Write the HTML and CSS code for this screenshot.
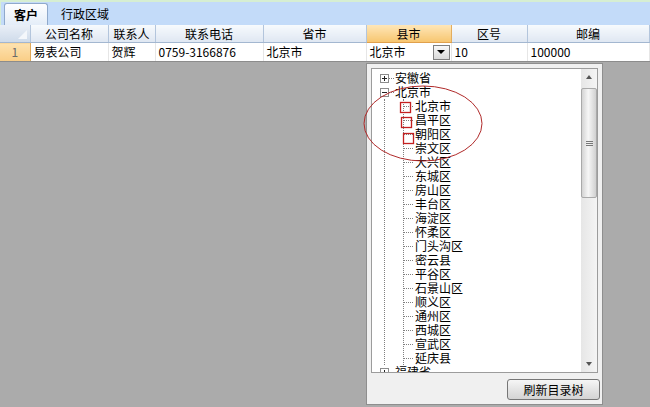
FILE: index.html
```html
<!DOCTYPE html>
<html lang="zh-CN">

<head>
    <meta charset="UTF-8">
    <meta name="viewport" content="width=device-width, initial-scale=1.0">
    <title>客户</title>
    <link rel="stylesheet" href="styles.css">
</head>

<body>
    <div class="app">
        <div class="tabs">
            <div class="tab active">客户</div>
            <div class="tab">行政区域</div>
        </div>

        <table class="grid">
            <colgroup>
                <col style="width:30px">
                <col style="width:78px">
                <col style="width:47px">
                <col style="width:108px">
                <col style="width:103px">
                <col style="width:85px">
                <col style="width:76px">
                <col style="width:122px">
            </colgroup>
            <thead>
                <tr>
                    <th class="corner"><div class="corner-in"><span class="tri"></span></div></th>
                    <th>公司名称</th>
                    <th>联系人</th>
                    <th>联系电话</th>
                    <th>省市</th>
                    <th class="sel">县市</th>
                    <th>区号</th>
                    <th>邮编</th>
                </tr>
            </thead>
            <tbody>
                <tr>
                    <td class="rownum">1</td>
                    <td>易表公司</td>
                    <td>贺辉</td>
                    <td>0759-3166876</td>
                    <td>北京市</td>
                    <td class="combo">
                        <div class="combo-in">
                            <span>北京市</span>
                            <span class="drop-btn"><span class="arrow-down"></span></span>
                        </div>
                    </td>
                    <td>10</td>
                    <td>100000</td>
                </tr>
            </tbody>
        </table>

        <div class="popup">
            <div class="tree-box">
                <div class="tree">
                    <div class="node first"><span class="exp plus"></span><span class="hdots"></span>安徽省</div>
                    <div class="node"><span class="exp"></span><span class="hdots"></span>北京市</div>
                    <div class="kids">
                        <div class="leaves">
                            <div class="leaf">北京市</div>
                            <div class="leaf">昌平区</div>
                            <div class="leaf">朝阳区</div>
                            <div class="leaf">崇文区</div>
                            <div class="leaf">大兴区</div>
                            <div class="leaf">东城区</div>
                            <div class="leaf">房山区</div>
                            <div class="leaf">丰台区</div>
                            <div class="leaf">海淀区</div>
                            <div class="leaf">怀柔区</div>
                            <div class="leaf">门头沟区</div>
                            <div class="leaf">密云县</div>
                            <div class="leaf">平谷区</div>
                            <div class="leaf">石景山区</div>
                            <div class="leaf">顺义区</div>
                            <div class="leaf">通州区</div>
                            <div class="leaf">西城区</div>
                            <div class="leaf">宣武区</div>
                            <div class="leaf">延庆县</div>
                        </div>
                    </div>
                    <div class="node"><span class="exp plus"></span><span class="hdots"></span>福建省</div>
                </div>
                <div class="scroll">
                    <div class="sb-btn"><span class="arrow-up"></span></div>
                    <div class="thumb"><span class="grip"></span><span class="grip"></span><span class="grip"></span></div>
                    <div class="track"></div>
                    <div class="sb-btn"><span class="arrow-down light"></span></div>
                </div>
            </div>
            <div class="btn-row">
                <button class="btn-refresh">刷新目录树</button>
            </div>
        </div>

        <!-- 红色标注 -->
        <svg class="marks" width="650" height="407" viewBox="0 0 650 407">
            <ellipse cx="423" cy="123.5" rx="59" ry="37.5" fill="none" stroke="#b02a2a" stroke-width="1" />
            <rect x="400.5" y="102.5" width="10" height="10" fill="none" stroke="#c42020" stroke-width="1.3" />
            <rect x="401.5" y="117.5" width="10" height="10" fill="none" stroke="#c42020" stroke-width="1.3" />
            <rect x="403.5" y="133.5" width="10" height="10" fill="none" stroke="#c42020" stroke-width="1.3" />
        </svg>
    </div>
</body>

</html>
```

FILE: styles.css
```css
body,
html {
    margin: 0;
    padding: 0;
    height: 100%;
    font-family: "Noto Sans CJK SC", "Liberation Sans", sans-serif;
    font-size: 12px;
    color: #000;
    background: #ababab;
    overflow: hidden;
}

.app {
    position: relative;
    width: 650px;
    height: 407px;
}

.tabs {
    height: 23px;
    border-top: 2px solid #d6eed2;
    border-left: 1px solid #d6eed2;
    background: #c3dbf9;
    display: flex;
    align-items: flex-end;
    padding-left: 3px;
}

.tab {
    height: 22px;
    line-height: 21px;
    padding: 0 13px 0 13px;
    box-sizing: border-box;
}

.tab.active {
    width: 44px;
    padding: 0;
    text-align: center;
    font-weight: bold;
    background: linear-gradient(#fdfeff, #e4edf8);
    border: 1px solid #8fa9cb;
    border-bottom: none;
    border-radius: 3px 3px 0 0;
}

.grid {
    border-collapse: collapse;
    table-layout: fixed;
    width: 649px;
    background: #fff;
}

.grid th {
    height: 17px;
    padding: 0;
    font-weight: normal;
    text-align: center;
    line-height: 17px;
    background: linear-gradient(#f7fafd, #dfe7f2);
    border-right: 1px solid #b3c5dc;
    border-bottom: 1px solid #a3b7d0;
}

.grid th.sel {
    background: linear-gradient(#fee6b8, #f7c670);
    border-right-color: #e3ad5e;
    border-bottom-color: #e0a04c;
}

.grid th.corner {
    background: linear-gradient(#e9eff7, #cfdbea);
}

.corner-in {
    height: 17px;
    display: flex;
    justify-content: flex-end;
    align-items: flex-end;
    padding: 0 3px 3px 0;
    box-sizing: border-box;
}

.tri {
    width: 0;
    height: 0;
    border-left: 9px solid transparent;
    border-bottom: 9px solid #f4f7fb;
}

.grid td {
    height: 18px;
    padding: 0 0 0 3px;
    line-height: 18px;
    white-space: nowrap;
    overflow: hidden;
    border-right: 1px solid #e6e6e6;
    border-bottom: 1px solid #8c8c8c;
}

.grid td.rownum {
    padding: 0;
    text-align: center;
    color: #6a6a6a;
    background: linear-gradient(#fde2b0, #f9cd85);
    border-right: 1px solid #e0a858;
}

.combo-in {
    display: flex;
    justify-content: space-between;
    align-items: center;
    padding-right: 1px;
}

.drop-btn {
    width: 15px;
    height: 13px;
    border: 1px solid #7f7f7f;
    background: linear-gradient(#f8f8f8, #d9d9d9);
    display: flex;
    justify-content: center;
    align-items: center;
}

.arrow-down {
    width: 0;
    height: 0;
    border-left: 4px solid transparent;
    border-right: 4px solid transparent;
    border-top: 4px solid #000;
}

.arrow-down.light,
.arrow-up {
    border-left-width: 3.5px;
    border-right-width: 3.5px;
    border-top-color: #555;
}

.arrow-up {
    width: 0;
    height: 0;
    border-left: 3.5px solid transparent;
    border-right: 3.5px solid transparent;
    border-bottom: 4px solid #555;
}

/* 下拉面板 */
.popup {
    position: absolute;
    left: 366px;
    top: 63px;
    width: 237px;
    height: 342px;
    box-sizing: border-box;
    border: 1px solid #8e8e8e;
    background: #f0f0f0;
    padding: 4px;
    display: flex;
    flex-direction: column;
}

.tree-box {
    height: 305px;
    box-sizing: border-box;
    border: 1px solid #9c9c9c;
    background: #fff;
    display: flex;
}

.tree {
    flex: 1;
    overflow: hidden;
    padding: 2px 0 0 8px;
    line-height: 14px;
}

.node,
.leaf {
    height: 14px;
    display: flex;
    align-items: center;
    white-space: nowrap;
}

/* 安徽省 与 北京市 之间的连线 */
.node.first {
    background: linear-gradient(90deg, transparent 4px, #fff 4px) 0 11px / 100% 3px no-repeat,
        repeating-linear-gradient(#808080 0 1px, transparent 1px 2px) 4px 11px / 1px 3px no-repeat;
}

.exp {
    width: 9px;
    height: 9px;
    box-sizing: border-box;
    border: 1px solid #8c8c8c;
    background: linear-gradient(#222, #222) center / 5px 1px no-repeat, #fff;
}

.exp.plus {
    background: linear-gradient(#222, #222) center / 5px 1px no-repeat,
        linear-gradient(#222, #222) center / 1px 5px no-repeat, #fff;
}

.hdots {
    width: 5px;
    border-top: 1px dotted #808080;
    margin-right: 1px;
}

.kids {
    margin-left: 4px;
    border-left: 1px dotted #808080;
}

.leaves {
    margin-left: 18px;
    border-left: 1px dotted #808080;
}

.leaf::before {
    content: "";
    width: 9px;
    border-top: 1px dotted #808080;
    margin-right: 2px;
}

.scroll {
    width: 16px;
    display: flex;
    flex-direction: column;
    background: linear-gradient(90deg, #e6e6e6, #f4f4f4);
}

.sb-btn {
    height: 16px;
    display: flex;
    justify-content: center;
    align-items: center;
}

.thumb {
    margin-top: 3px;
    height: 110px;
    box-sizing: border-box;
    border: 1px solid #a9a9a9;
    border-radius: 2px;
    background: linear-gradient(90deg, #d3d3d3, #f6f6f6 45%, #d0d0d0);
    display: flex;
    flex-direction: column;
    justify-content: center;
    align-items: center;
    gap: 1px;
}

.grip {
    width: 7px;
    height: 1px;
    background: #777;
}

.track {
    flex: 1;
}

.btn-row {
    margin-top: 6px;
    margin-right: -2px;
    display: flex;
    justify-content: flex-end;
}

.btn-refresh {
    width: 93px;
    height: 21px;
    padding: 0;
    font-family: inherit;
    font-size: 12px;
    color: #000;
    border: 1px solid #767676;
    border-radius: 3px;
    background: linear-gradient(#f6f6f6, #e4e4e4 50%, #d4d4d4);
}

.marks {
    position: absolute;
    left: 0;
    top: 0;
    pointer-events: none;
}
```
